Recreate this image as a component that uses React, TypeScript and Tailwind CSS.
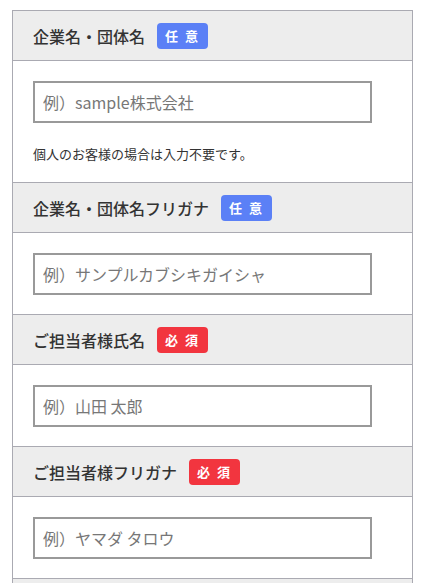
import React from "react";

type Field = {
  label: string;
  required: boolean;
  placeholder: string;
  note?: string;
};

const fields: Field[] = [
  { label: "企業名・団体名", required: false, placeholder: "例）sample株式会社", note: "個人のお客様の場合は入力不要です。" },
  { label: "企業名・団体名フリガナ", required: false, placeholder: "例）サンプルカブシキガイシャ" },
  { label: "ご担当者様氏名", required: true, placeholder: "例）山田 太郎" },
  { label: "ご担当者様フリガナ", required: true, placeholder: "例）ヤマダ タロウ" },
];

function Badge({ required }: { required: boolean }) {
  return (
    <span
      className={
        "ml-3 flex h-[26px] w-[51px] items-center justify-center rounded-[4px] text-[13px] font-bold leading-none tracking-[2px] text-white " +
        (required ? "bg-[#f2353f]" : "bg-[#5b80f6]")
      }
    >
      {required ? "必 須" : "任 意"}
    </span>
  );
}

export default function App() {
  return (
    <div
      className="h-[583px] overflow-hidden bg-white pl-[12px] pt-[10px]"
      style={{ fontFamily: '"Noto Sans CJK JP", "Noto Sans", sans-serif' }}
    >
      <div className="w-[401px] border border-b-0 border-[#aaaab2]">
        {fields.map((f, i) => (
          <div key={i} className={i > 0 ? "border-t border-[#aaaab2]" : ""}>
            <div className="flex h-[49px] items-center bg-[#ededed] pl-[20px]">
              <span className="text-[16px] font-medium leading-none text-[#333]">{f.label}</span>
              <Badge required={f.required} />
            </div>
            <div className="border-t border-[#aaaab2] bg-white pl-[20px] pt-[20px] pb-[19px]">
              <input
                type="text"
                placeholder={f.placeholder}
                className="block h-[42px] w-[339px] border-2 border-[#999] bg-white px-[8px] text-[16px] text-[#333] outline-none placeholder:text-[#777]"
              />
              {f.note && (
                <p className="pt-[22px] text-[13px] leading-[18px] text-[#333]">{f.note}</p>
              )}
            </div>
          </div>
        ))}
        <div className="h-[20px] border-t border-[#aaaab2] bg-[#ededed]" />
      </div>
    </div>
  );
}
